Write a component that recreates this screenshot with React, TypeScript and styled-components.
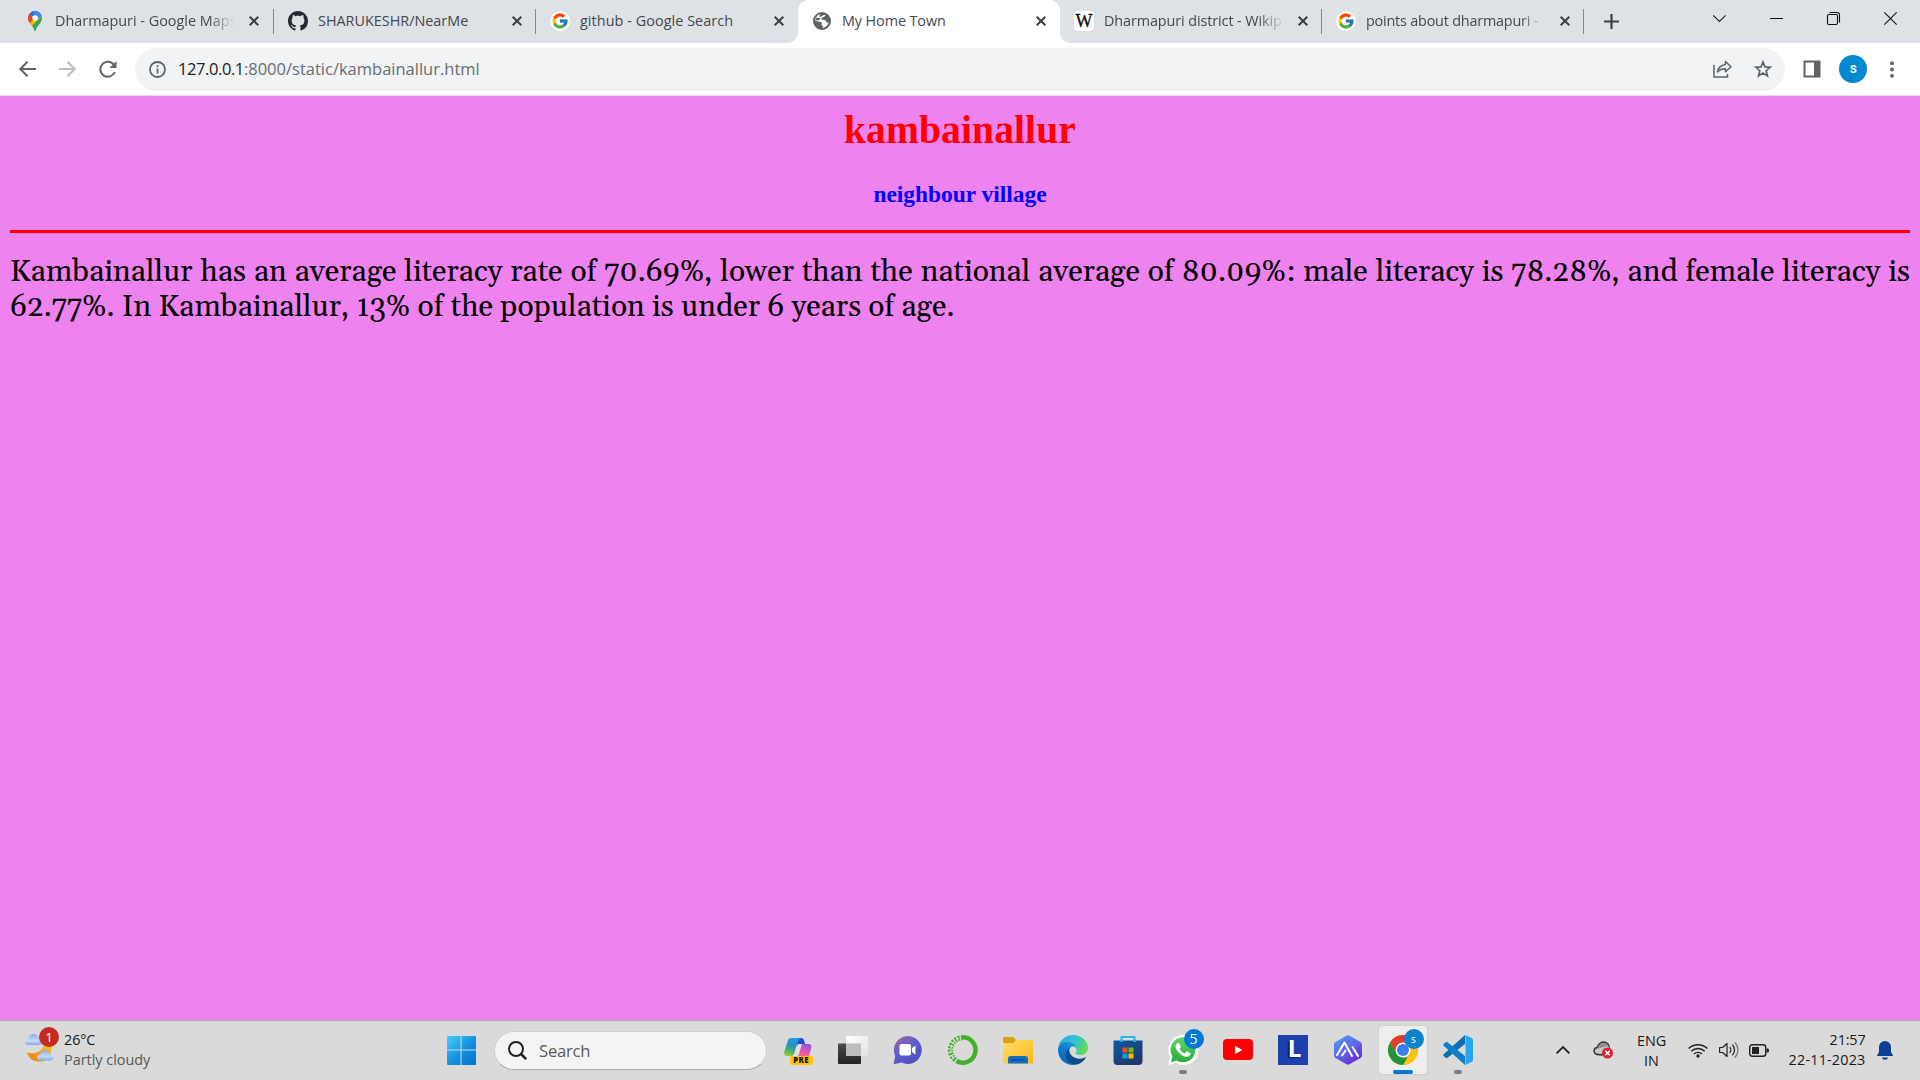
import React from 'react';
import styled, { createGlobalStyle, css } from 'styled-components';
import { FcGoogle } from 'react-icons/fc';

const UI = '"Open Sans", "Noto Sans", sans-serif';

const GlobalStyle = createGlobalStyle`
  * { box-sizing: border-box; }
  body { margin: 0; background: #dee1e6; font-family: ${UI}; }
  svg { display: block; flex: none; overflow: visible; }
`;

const Screen = styled.div`
  width: 1920px;
  height: 1080px;
  display: flex;
  flex-direction: column;
  overflow: hidden;
`;

/* ---------- tab strip ---------- */

const TabStrip = styled.header`
  height: 43px;
  flex: none;
  display: flex;
  padding-left: 12px;
  background: #dee1e6;
`;

const flare = css`
  content: '';
  position: absolute;
  bottom: 0;
  width: 10px;
  height: 10px;
`;

const Tab = styled.div<{ $active?: boolean; $divider?: boolean }>`
  position: relative;
  width: 262px;
  height: 43px;
  flex: none;
  display: flex;
  align-items: center;
  gap: 10px;
  padding: 0 10px 1px 14px;
  &:first-child { padding: 0 11px 1px 13px; }
  ${({ $divider }) => $divider && css`
    background: linear-gradient(#85888c, #85888c) right 9px / 1px 25px no-repeat;
  `}
  ${({ $active }) => $active && css`
    background: #fff;
    border-radius: 10px 10px 0 0;
    &::before {
      ${flare}
      left: -10px;
      background: radial-gradient(circle at 0 0, transparent 9.5px, #fff 10px);
    }
    &::after {
      ${flare}
      right: -10px;
      background: radial-gradient(circle at 100% 0, transparent 9.5px, #fff 10px);
    }
  `}
`;

const Favicon = styled.span<{ $plate?: string }>`
  width: 20px;
  height: 20px;
  flex: none;
  display: flex;
  align-items: center;
  justify-content: center;
  border-radius: ${({ $plate }) => $plate ?? '0'};
  background: ${({ $plate }) => ($plate ? '#fff' : 'transparent')};
  color: #24292f;
`;

const WikiLetter = styled.span`
  font: 400 18px/20px "Liberation Serif", serif;
  -webkit-text-stroke: 0.4px #111;
  color: #111;
`;

const TabTitle = styled.span<{ $spacing: number; $fade?: boolean }>`
  flex: 1;
  min-width: 0;
  overflow: hidden;
  white-space: nowrap;
  font-size: 14.4px;
  line-height: 22px;
  letter-spacing: ${({ $spacing }) => $spacing}px;
  color: #45484d;
  ${({ $fade }) => $fade && css`
    mask-image: linear-gradient(90deg, #000 154px, transparent 180px);
  `}
`;

const CloseSlot = styled.span`
  width: 20px;
  display: flex;
  justify-content: center;
  margin-right: -1px;
`;

const NewTab = styled.div`
  width: 54px;
  display: flex;
  align-items: center;
  justify-content: center;
`;

const WindowControls = styled.div`
  margin-left: auto;
  height: 37px;
  display: flex;
  padding-right: 1px;
`;

const WindowButton = styled.div`
  width: 57px;
  display: flex;
  align-items: center;
  justify-content: center;
`;

/* ---------- toolbar ---------- */

const Toolbar = styled.div`
  height: 53px;
  flex: none;
  display: flex;
  align-items: center;
  padding: 0 2px 0 7px;
  background: #fff;
  border-bottom: 1px solid #dcdfe3;
`;

const NavButton = styled.div<{ $faded?: boolean }>`
  width: 40.3px;
  flex: none;
  display: flex;
  justify-content: center;
  color: ${({ $faded }) => ($faded ? '#babcbe' : '#5f6368')};
`;

const AddressBar = styled.div`
  width: 1650px;
  height: 43px;
  flex: none;
  margin-left: 7px;
  display: flex;
  align-items: center;
  padding: 0 2px 0 14px;
  border-radius: 22px;
  background: #f1f3f4;
  color: #5f6368;
`;

const Url = styled.span`
  margin-left: 12px;
  flex: 1;
  font-size: 16.5px;
  line-height: 24px;
  letter-spacing: 0;
  color: #6a6e73;
  b { font-weight: 400; color: #202124; letter-spacing: -0.4px; }
`;

const BarAction = styled.div`
  width: 40px;
  display: flex;
  justify-content: center;
`;

const SideButton = styled.div<{ $width: number }>`
  width: ${({ $width }) => $width}px;
  display: flex;
  justify-content: center;
  color: #5f6368;
`;

const Avatar = styled.div`
  width: 28px;
  height: 28px;
  flex: none;
  border-radius: 50%;
  background: #0288d1;
  color: #fff;
  font: 500 14px/27px Roboto, sans-serif;
  text-align: center;
`;

/* ---------- page ---------- */

const Page = styled.main`
  flex: 1;
  padding: 11px 10px 0;
  background: violet;
  font-family: "Liberation Serif", serif;
`;

const Title = styled.h1`
  margin: 0;
  font-size: 39.5px;
  line-height: 47px;
  letter-spacing: 0.12px;
  text-align: center;
  color: red;
`;

const Subtitle = styled.h3`
  margin: 26px 0 0;
  font-size: 23.4px;
  line-height: 28px;
  text-align: center;
  color: blue;
`;

const Rule = styled.hr`
  height: 3px;
  margin: 22px 0 0;
  border: 0;
  background: red;
`;

const Article = styled.p`
  margin: 22px 0 0;
  font: 30px/35px Gelasio, Georgia, "Liberation Serif", serif;
  text-align: justify;
  color: #000;
`;

/* ---------- taskbar ---------- */

const Taskbar = styled.footer`
  height: 60px;
  flex: none;
  display: flex;
  background: #dadada;
  border-top: 1px solid #ababab;
`;

const Weather = styled.div`
  width: 433.5px;
  flex: none;
  display: flex;
  padding: 5px 0 0 24px;
`;

const WeatherIcon = styled.div`
  position: relative;
  width: 40px;
  height: 40px;
`;

const Badge = styled.span<{ $color: string; $size?: number }>`
  position: absolute;
  top: ${({ $size }) => ($size ? -6 : 1)}px;
  right: -6px;
  width: 20px;
  height: 20px;
  border-radius: 50%;
  background: ${({ $color }) => $color};
  color: #fff;
  font-size: ${({ $size }) => $size ?? 13.5}px;
  line-height: 20px;
  text-align: center;
`;

const WeatherBadge = styled(Badge)`
  right: auto;
  left: 15px;
`;

const SmallText = styled.div<{ $muted?: boolean; $spacing?: number }>`
  font-size: 14.4px;
  line-height: 20px;
  letter-spacing: ${({ $spacing }) => $spacing ?? 0}px;
  white-space: nowrap;
  color: ${({ $muted }) => ($muted ? '#575757' : '#1b1b1b')};
`;

const TwoLines = styled.div<{ $align?: string; $width?: number; $top?: number }>`
  width: ${({ $width }) => ($width ? `${$width}px` : 'auto')};
  padding-top: ${({ $top }) => $top ?? 9}px;
  text-align: ${({ $align }) => $align ?? 'left'};
`;

const WeatherText = styled.div`
  padding-top: 4px;
`;

const AppSlot = styled.div<{ $open?: 'idle' | 'active' }>`
  width: 55px;
  height: 58px;
  flex: none;
  display: flex;
  align-items: center;
  justify-content: center;
  position: relative;
  ${({ $open }) => $open && css`
    &::after {
      content: '';
      position: absolute;
      bottom: 5px;
      left: 50%;
      width: ${$open === 'active' ? 20 : 8}px;
      height: 4px;
      transform: translateX(-50%);
      border-radius: 2px;
      background: ${$open === 'active' ? '#0078d4' : '#7d7d7d'};
    }
  `}
`;

const IconBox = styled.div<{ $selected?: boolean }>`
  width: 30px;
  height: 30px;
  position: relative;
  ${({ $selected }) => $selected && css`
    border-radius: 1px;
    background: #eee;
    box-shadow: 0 0 0 9px #eee, 0 0 1px 10px #d0d0d0;
  `}
`;

const SearchBox = styled.div`
  width: 273.5px;
  height: 39px;
  flex: none;
  margin: 10px 3px 0 5px;
  display: flex;
  align-items: center;
  padding-left: 13px;
  gap: 12.5px;
  border: 1px solid #cfcfcf;
  border-bottom-color: #aaa;
  border-radius: 20px;
  background: #f4f4f4;
  font-size: 16.6px;
  letter-spacing: -0.2px;
  color: #5c5c5c;
`;

const PreLabel = styled.span`
  position: absolute;
  left: 7px;
  top: 21px;
  width: 23px;
  height: 9px;
  border-radius: 2px;
  background: #ffc20e;
  color: #1c1500;
  font-size: 7.8px;
  font-weight: 800;
  line-height: 9px;
  letter-spacing: 0.4px;
  text-align: center;
`;

const LetterTile = styled.div`
  width: 30px;
  height: 30px;
  background: #1e40af;
  color: #fff;
  font: 700 24px/26px "Open Sans", sans-serif;
  text-align: center;
  text-shadow: -2px 1px 0 #0f2850;
  padding-left: 4px;
`;

const Tray = styled.div`
  margin-left: auto;
  display: flex;
  padding-right: 16.5px;
`;

const TraySlot = styled.div<{ $width: number }>`
  width: ${({ $width }) => $width}px;
  height: 58px;
  flex: none;
  display: flex;
  align-items: center;
  justify-content: center;
`;

/* ---------- drawings ---------- */

const Close = () => (
  <svg width="10" height="10" viewBox="0 0 10 10" stroke="#3c4043" strokeWidth="2">
    <path d="M.7.7 9.3 9.3M9.3.7.7 9.3" />
  </svg>
);

const Octocat = () => (
  <svg width="20" height="20" viewBox="0 0 16 16" fill="#24292f">
    <path d="M8 0C3.58 0 0 3.58 0 8c0 3.54 2.29 6.53 5.47 7.59.4.07.55-.17.55-.38 0-.19-.01-.82-.01-1.49-2.01.37-2.53-.49-2.69-.94-.09-.23-.48-.94-.82-1.13-.28-.15-.68-.52-.01-.53.63-.01 1.08.58 1.23.82.72 1.21 1.87.87 2.33.66.07-.52.28-.87.51-1.07-1.78-.2-3.64-.89-3.64-3.95 0-.87.31-1.59.82-2.15-.08-.2-.36-1.02.08-2.12 0 0 .67-.21 2.2.82.64-.18 1.32-.27 2-.27.68 0 1.36.09 2 .27 1.53-1.04 2.2-.82 2.2-.82.44 1.1.16 1.92.08 2.12.51.56.82 1.27.82 2.15 0 3.07-1.87 3.75-3.65 3.95.29.25.54.73.54 1.48 0 1.07-.01 1.93-.01 2.2 0 .21.15.46.55.38A8.013 8.013 0 0 0 16 8c0-4.42-3.58-8-8-8z" />
  </svg>
);

const MapsPin = () => (
  <svg width="14" height="20" viewBox="0 0 14 20">
    <clipPath id="pin"><path d="M7 0a7 7 0 0 0-7 7c0 2 .7 3.5 1.8 5C3.600 14.400 5.400 16 6.200 19c.2.8.4 1 .8 1s.6-.2.8-1c.8-3 2.600-4.600 4.400-7C13.300 10.500 14 9 14 7a7 7 0 0 0-7-7Z" /></clipPath>
    <g clipPath="url(#pin)">
      <path fill="#34a853" d="M0 0h14v20H0z" />
      <path fill="#fbbc04" d="M0 12 9 2l4 4-10.500 10H0z" />
      <path fill="#ea4335" d="M-1 1 2 2l5 5-6 6-3-3z" />
      <path fill="#1a73e8" d="M1.600 2.500 4 0h4L7 7z" />
      <path fill="#4285f4" d="M5 9.500 13.500 0H4l3 4.600z" />
      <path fill="#4285f4" d="M9 0h5v5L9.500 8z" />
    </g>
    <circle cx="7" cy="7" r="2.700" fill="#fff" />
  </svg>
);

const Globe = () => (
  <svg width="18" height="18" viewBox="0 0 18 18">
    <circle cx="9" cy="9" r="9" fill="#5f6368" />
    <path fill="#fff" d="M12.300 2.800c-.2 1.700-1.200 2.400-2.600 2.500-.7.100-.9.500-.9 1.100 0 .7-.3 1-.9 1.300 1.600.2 3.300-.2 4.300.5.800.6.7 1.600 1.500 2 .6.300 1.500.2 2 .6-.8 2.700-3 4.600-6 5.100.2-1 .2-1.700-.4-2.200-.7-.5-.8-1.200-.5-2.100.3-.8-.2-1.300-1-1.500-1.800-.3-3.900-.4-5.700-1.300.1-3.300 2.300-6 5.300-6.700-.5.8-1.200 1.200-1 2.100.3.900 1.400.7 2.200.2.900-.6 1.900-1.500 3.700-1.600Z" />
    <path fill="#5f6368" d="M3.600 5.200c1.200.9 2.600.4 3.500.9.500.4.200 1.200-.6 1.600-1 .4-2.700.9-4.300.8Z" />
  </svg>
);

const WeatherArt = () => (
  <svg width="34" height="36" viewBox="0 0 34 36">
    <defs>
      <linearGradient id="cloud" x1="0" y1="0" x2="0" y2="1"><stop stopColor="#8caee8" /><stop offset=".6" stopColor="#c5daf8" /><stop offset="1" stopColor="#86a9e6" /></linearGradient>
      <linearGradient id="moon" x1="1" y1="0" x2="0" y2="1"><stop stopColor="#f8c320" /><stop offset="1" stopColor="#ee7b16" /></linearGradient>
    </defs>
    <path fill="url(#cloud)" d="M4 19C0 19 0 13.500 4 13c1-6 9-6.500 10.500-1.500 5 0 5 7.500 1 7.500Z" />
    <path fill="url(#moon)" d="M3 26.500c7 2.500 15.500-1 16.500-7 3-1 6-1.500 8-1 1 10-4 17.500-13 17-6 0-10-4-11.500-9Z" />
    <path fill="url(#cloud)" d="M16 34.500c-4 0-4-5.500 0-6 1.500-6 9-5.500 10 0 5 .5 4.500 6 .5 6Z" />
  </svg>
);

const WindowsLogo = () => (
  <svg width="30" height="30" viewBox="0 0 30 30">
    <defs><linearGradient id="win" gradientUnits="userSpaceOnUse" x1="0" y1="0" x2="30" y2="30"><stop stopColor="#4cd2ff" /><stop offset=".55" stopColor="#1291e0" /><stop offset="1" stopColor="#0072d0" /></linearGradient></defs>
    <path fill="url(#win)" d="M2 1h12.500v13.500H1V2a1 1 0 0 1 1-1ZM15.500 1H29a1 1 0 0 1 1 1v12.500H15.500ZM1 15.500h13.500V30H2a1 1 0 0 1-1-1ZM15.500 15.500H30V29a1 1 0 0 1-1 1H15.500Z" />
  </svg>
);

const Copilot = () => (
  <svg width="30" height="30" viewBox="0 0 30 30">
    <defs>
      <linearGradient id="cpa" x1=".5" y1="0" x2=".2" y2="1"><stop stopColor="#159fe8" /><stop offset=".4" stopColor="#2b8fc4" /><stop offset=".75" stopColor="#4fb85c" /><stop offset="1" stopColor="#a5c840" /></linearGradient>
      <linearGradient id="cpb" x1=".6" y1="0" x2=".3" y2="1"><stop stopColor="#9a50e0" /><stop offset=".5" stopColor="#d455c0" /><stop offset="1" stopColor="#ff6b72" /></linearGradient>
    </defs>
    <path fill="#1a50cf" d="M14 3h4c2.500 0 3 2 3.500 3.500L22 9h-5l-3 3Z" />
    <path fill="url(#cpa)" d="M8 3h10c-2.500 1-3 3-4 6l-2.500 8.500c-.8 2.500-1.500 3.500-3.500 3.500H4.500C1.500 21 .5 19 1.500 16l3.200-10C5.500 4 6.300 3 8 3Z" />
    <path fill="#dfe3e6" d="M15 9h3.500L15 21h-4.500c1.500-3 2.500-8 4.500-12Z" />
    <path fill="url(#cpb)" d="M19 9h6.500c2.500 0 3.500 1.700 2.800 4L26 21H14.500c1-.5 1.500-1.500 2-3.500Z" />
  </svg>
);

const TaskView = () => (
  <svg width="30" height="30" viewBox="0 0 30 30">
    <defs><linearGradient id="tvd" x1="0" y1="0" x2="0" y2="1"><stop stopColor="#4b4b4b" /><stop offset="1" stopColor="#222" /></linearGradient><linearGradient id="tvl" x1="0" y1="0" x2="1" y2="1"><stop stopColor="#fff" /><stop offset="1" stopColor="#e2e2e2" /></linearGradient></defs>
    <rect y="8.500" width="23" height="20.500" rx="1" fill="url(#tvd)" />
    <rect x="8" y="1" width="22" height="20" rx="1" fill="url(#tvl)" />
    <path d="M8 8.500h15V21H8Z" fill="#bdbdbd" />
  </svg>
);

const ChatApp = () => (
  <svg width="30" height="30" viewBox="0 0 30 30">
    <defs><linearGradient id="chat" x1="0" y1="0" x2=".7" y2="1"><stop offset=".1" stopColor="#9a68a8" /><stop offset=".55" stopColor="#5b5bc9" /><stop offset="1" stopColor="#4f52c4" /></linearGradient></defs>
    <path fill="url(#chat)" d="M15 1a14 14 0 1 1-6.500 26.500L2 29c-1 .1-1.400-.5-1.200-1.300L2.200 21A14 14 0 0 1 15 1Z" />
    <rect x="6.500" y="9" width="11.500" height="11.500" rx="2" fill="#fff" />
    <path fill="#fff" d="m19 13 3.500-2.500v9L19 17Z" />
  </svg>
);

const Anaconda = () => (
  <svg width="30" height="30" viewBox="0 0 30 30" fill="none" stroke="#43b02a">
    <path strokeWidth="4.500" d="M15 2.300A12.700 12.700 0 1 1 8.500 26" />
    <path strokeWidth="5" strokeDasharray="2 1.200" d="M15 2.700A12.300 12.300 0 0 0 8 25.300" />
    <path strokeWidth="1.300" stroke="#dadada" d="M11 3.300A12.500 12.500 0 0 0 6 23.500" strokeDasharray="3 2" />
  </svg>
);

const Explorer = () => (
  <svg width="30" height="30" viewBox="0 0 30 30">
    <defs><linearGradient id="fold" x1="0" y1="0" x2="1" y2="1"><stop stopColor="#ffdf70" /><stop offset="1" stopColor="#fcb813" /></linearGradient></defs>
    <path fill="#e0a008" d="M0 3.500A1.500 1.500 0 0 1 1.500 2H10l3 3h16a1 1 0 0 1 1 1v6H0Z" />
    <path fill="url(#fold)" d="M0 8h10l3-3h16a1 1 0 0 1 1 1v21.500a1 1 0 0 1-1 1H1a1 1 0 0 1-1-1Z" />
    <path fill="#0f6fc0" d="M5 28.500V24a3 3 0 0 1 3-3h14a3 3 0 0 1 3 3v4.500Z" />
    <path stroke="#0a3d7c" d="M8.500 25h13" />
  </svg>
);

const Edge = () => (
  <svg width="30" height="30" viewBox="0 0 256 256">
    <defs>
      <linearGradient id="e1" x1="0" y1=".5" x2="1" y2=".5"><stop stopColor="#0c4c8c" /><stop offset="1" stopColor="#114a8b" /></linearGradient>
      <linearGradient id="e2" x1=".8" y1="0" x2=".3" y2="1"><stop stopColor="#1b9de2" /><stop offset=".6" stopColor="#0f72c8" /><stop offset="1" stopColor="#0a68b8" /></linearGradient>
      <linearGradient id="e3" x1="0" y1=".3" x2="1" y2=".6"><stop stopColor="#2aa7e2" /><stop offset=".5" stopColor="#32c3d4" /><stop offset=".8" stopColor="#4fd280" /><stop offset="1" stopColor="#68dd50" /></linearGradient>
    </defs>
    <path fill="url(#e1)" d="M231 190.500c-3.400 1.800-6.900 3.400-10.500 4.700a101.700 101.700 0 0 1-35.900 6.400c-47.300 0-88.500-32.500-88.500-74.300a31.500 31.500 0 0 1 16.400-27.300c-42.800 1.800-53.800 46.400-53.800 72.500 0 74 68.100 81.400 82.800 81.400 7.900 0 19.800-2.300 27-4.600l1.300-.4a128.300 128.300 0 0 0 66.600-52.800 4 4 0 0 0-5.400-5.600Z" />
    <path fill="url(#e2)" d="M105.700 241.400a79.200 79.200 0 0 1-22.700-21.300 80.700 80.700 0 0 1 29.500-120c3.200-1.500 8.500-4.100 15.600-4a32.400 32.400 0 0 1 25.700 13 31.900 31.900 0 0 1 6.300 18.700c0-.2 24.500-79.600-80-79.600-43.900 0-80 41.700-80 78.200a130 130 0 0 0 12.100 56 128 128 0 0 0 156.400 67.100 75.600 75.600 0 0 1-62.800-8Z" />
    <path fill="url(#e3)" d="M152.300 148.900c-.9 1-3.300 2.500-3.300 5.700 0 2.600 1.700 5.200 4.800 7.300 14.300 10 41.400 8.600 41.500 8.600a59.600 59.600 0 0 0 30.300-8.300 61.400 61.400 0 0 0 30.400-52.900c.3-22.400-8-37.300-11.300-43.900C223.500 23.900 177.700 0 128 0A128 128 0 0 0 0 126.200c.5-36.500 36.800-66 80-66 3.500 0 23.500.3 42 10a72.600 72.600 0 0 1 30.900 29.300c6.100 10.600 7.200 24.100 7.200 29.500s-2.700 13.300-7.800 19.900Z" />
  </svg>
);

const Store = () => (
  <svg width="30" height="30" viewBox="0 0 30 30">
    <defs><linearGradient id="store" x1="0" y1="0" x2=".6" y2="1"><stop stopColor="#0a5aa8" /><stop offset="1" stopColor="#20386a" /></linearGradient></defs>
    <path fill="none" stroke="#2fb5ee" strokeWidth="2" d="M8.500 7V2h13v5" />
    <path fill="url(#store)" d="M.5 5.500h29V26a4 4 0 0 1-4 4h-21a4 4 0 0 1-4-4Z" />
    <path stroke="#35bdf2" strokeWidth="2" d="M8.500 4v3M21.500 4v3" />
    <path fill="#f25022" d="M9.500 12.500h5v5h-5z" /><path fill="#7fba00" d="M15.500 12.500h5v5h-5z" />
    <path fill="#00a4ef" d="M9.500 18.500h5v5h-5z" /><path fill="#ffb900" d="M15.500 18.500h5v5h-5z" />
  </svg>
);

const WhatsApp = () => (
  <svg width="30" height="30" viewBox="0 0 30 30">
    <defs><linearGradient id="wa" x1="0" y1="0" x2="0" y2="1"><stop stopColor="#5fd667" /><stop offset="1" stopColor="#25ae3d" /></linearGradient></defs>
    <path fill="#fff" d="M15 0a15 15 0 1 1-7 28L0 30l2-8A15 15 0 0 1 15 0Z" />
    <path fill="url(#wa)" d="M15 2.300a12.500 12.500 0 1 1-6.300 23.300L3 27.200l1.500-5.700A12.500 12.500 0 0 1 15 2.300Z" />
    <path fill="#fff" d="M10 8c.8-.2 1.300 0 1.600.7l1.200 2.800c.2.5 0 1-1.300 2.300 1.300 2.400 3 3.700 5.200 4.800l1.500-1.800c.3-.4.6-.4 1.100-.2l2.700 1.300c.6.300.6.600.5 1.200-.4 2-2.200 3-4 3C13.800 21.500 7.500 14.800 7.500 11.500 7.500 10 8.500 8.300 10 8Z" />
  </svg>
);

const YouTube = () => (
  <svg width="30" height="30" viewBox="0 0 30 30">
    <rect y="4" width="30" height="21" rx="4" fill="#f00" />
    <path fill="#fff" d="m12 10.700 7.500 4.200-7.500 4.200Z" />
  </svg>
);

const HexApp = () => (
  <svg width="30" height="30" viewBox="0 0 30 30">
    <defs><linearGradient id="hex" x1="0" y1="0" x2=".6" y2="1"><stop stopColor="#4c9cf0" /><stop offset=".5" stopColor="#5a70e8" /><stop offset="1" stopColor="#6a30d8" /></linearGradient></defs>
    <path fill="url(#hex)" d="M13.500.7a3 3 0 0 1 3 0l11 6.200a3 3 0 0 1 1.500 2.600v11a3 3 0 0 1-1.500 2.600l-11 6.200a3 3 0 0 1-3 0l-11-6.200A3 3 0 0 1 1 20.500v-11a3 3 0 0 1 1.500-2.600Z" />
    <path fill="none" stroke="#fff" strokeWidth="2" strokeLinecap="round" strokeLinejoin="round" d="M4 20 11.500 7.500 19 21M9 20.500l3.500-5M19.500 12 25 21" />
  </svg>
);

const Chrome = () => (
  <svg width="30" height="30" viewBox="0 0 30 30">
    <circle cx="15" cy="15" r="15" fill="#fbc116" />
    <path fill="#e33b2e" d="M2 7.500A15 15 0 0 1 28 7.500H15L8.500 18.700Z" />
    <path fill="#22933f" d="M2 7.500 8.500 18.700 15 22.500h6.500L15 30A15 15 0 0 1 2 7.500Z" />
    <path fill="#fbc116" d="M28 7.500A15 15 0 0 1 15 30l6.500-11.300a7.500 7.500 0 0 0-6.500-11.200Z" />
    <circle cx="15" cy="15" r="7.500" fill="#fff" /><circle cx="15" cy="15" r="6" fill="#3b7ded" />
  </svg>
);

const VSCode = () => (
  <svg width="30" height="30" viewBox="0 0 30 30">
    <path fill="#0d6fb4" d="M22 0v9L4.500 22.800a1.500 1.500 0 0 1-1.800 0L.6 21a1.200 1.200 0 0 1 0-1.800Z" />
    <path fill="#127fc8" d="M22 30v-9L4.500 7.200a1.500 1.500 0 0 0-1.800 0L.6 9a1.200 1.200 0 0 0 0 1.800Z" />
    <path fill="#26a6f0" d="M22 0 28.500 3A2.500 2.500 0 0 1 30 5.200v19.600a2.500 2.500 0 0 1-1.500 2.200L22 30c.4-.8.500-1 .5-2V2c0-1-.1-1.300-.5-2Z" />
  </svg>
);

const tabs = [
  { icon: <Favicon><MapsPin /></Favicon>, title: 'Dharmapuri - Google Maps', spacing: 0, fade: true, divider: true },
  { icon: <Favicon><Octocat /></Favicon>, title: 'SHARUKESHR/NearMe', spacing: 0, divider: true },
  { icon: <Favicon $plate="50%"><FcGoogle size={18} /></Favicon>, title: 'github - Google Search', spacing: 0.06 },
  { icon: <Favicon><Globe /></Favicon>, title: 'My Home Town', spacing: -0.1, active: true },
  { icon: <Favicon $plate="4px"><WikiLetter>W</WikiLetter></Favicon>, title: 'Dharmapuri district - Wikip', spacing: -0.1, fade: true, divider: true },
  { icon: <Favicon $plate="50%"><FcGoogle size={18} /></Favicon>, title: 'points about dharmapuri -', spacing: -0.2, fade: true, divider: true },
];

export default function App() {
  return (
    <Screen>
      <GlobalStyle />
      <TabStrip>
        {tabs.map((t) => (
          <Tab key={t.title} $active={t.active} $divider={t.divider}>
            {t.icon}
            <TabTitle $spacing={t.spacing} $fade={t.fade}>{t.title}</TabTitle>
            <CloseSlot><Close /></CloseSlot>
          </Tab>
        ))}
        <NewTab>
          <svg width="15" height="15" viewBox="0 0 15 15" stroke="#3c4043" strokeWidth="2.200"><path d="M7.500 0v15M0 7.500h15" /></svg>
        </NewTab>
        <WindowControls>
          <WindowButton><svg width="13" height="7" viewBox="0 0 13 7" fill="none" stroke="#222" strokeWidth="1.100"><path d="m.3.3 6.200 6.200L12.700.3" /></svg></WindowButton>
          <WindowButton><svg width="13" height="1" viewBox="0 0 13 1"><path d="M0 0h13v1H0z" fill="#111" /></svg></WindowButton>
          <WindowButton>
            <svg width="13" height="13" viewBox="0 0 13 13" fill="none" stroke="#111" strokeWidth="1.100">
              <rect x=".5" y="2.500" width="10" height="10" rx="1.500" /><path d="M2.500.5h7.500a2.500 2.500 0 0 1 2.500 2.500v7.500" />
            </svg>
          </WindowButton>
          <WindowButton><svg width="13" height="13" viewBox="0 0 13 13" stroke="#111" strokeWidth="1.100"><path d="m.3.3 12.400 12.400M12.700.3.3 12.700" /></svg></WindowButton>
        </WindowControls>
      </TabStrip>

      <Toolbar>
        <NavButton><svg width="17" height="16" viewBox="0 0 17 16" fill="none" stroke="currentColor" strokeWidth="2"><path d="M17 8H1.500M8.500.8 1.300 8l7.200 7.200" /></svg></NavButton>
        <NavButton $faded><svg width="17" height="16" viewBox="0 0 17 16" fill="none" stroke="currentColor" strokeWidth="2"><path d="M0 8h15.500M8.500.8 15.700 8l-7.200 7.200" /></svg></NavButton>
        <NavButton>
          <svg width="18" height="17" viewBox="0 0 18 17" fill="none" stroke="currentColor" strokeWidth="2"><path d="M15.800 11a7.500 7.500 0 1 1-.9-7.200" /><path d="M17.500 0v7h-7Z" fill="currentColor" stroke="none" /></svg>
        </NavButton>
        <AddressBar>
          <svg width="17" height="17" viewBox="0 0 17 17" fill="none" stroke="currentColor" strokeWidth="1.800"><circle cx="8.500" cy="8.500" r="7.500" /><path d="M8.500 7.500v5M8.500 4.300v1.900" /></svg>
          <Url><b>127.0.0.1</b>:8000/static/kambainallur.html</Url>
          <BarAction>
            <svg width="19" height="18" viewBox="0 0 19 18" fill="none" stroke="currentColor" strokeWidth="1.500">
              <path d="M1 5v12h13.500v-3" /><path strokeLinejoin="round" d="M12.500 1.500 18 6.700l-5.500 5V8.800C9 8.800 6.500 9.800 4.500 12c.5-3.500 3-6.700 8-7.400Z" />
            </svg>
          </BarAction>
          <BarAction>
            <svg width="18" height="18" viewBox="0 0 18 18" fill="none" stroke="currentColor" strokeWidth="1.700"><path d="m9 2 2 4.900 5.200.4-4 3.400 1.300 5.200L9 13.100l-4.500 2.800 1.300-5.200-4-3.400L7 6.900Z" /></svg>
          </BarAction>
        </AddressBar>
        <SideButton $width={55}><svg width="18" height="18" viewBox="0 0 18 18"><path fill="currentColor" fillRule="evenodd" d="M.5.500h17v17H.5ZM2.500 2.500v13H11v-13Z" /></svg></SideButton>
        <SideButton $width={27}><Avatar>s</Avatar></SideButton>
        <SideButton $width={51}><svg width="4" height="17" viewBox="0 0 4 17" fill="currentColor"><circle cx="2" cy="2.200" r="1.900" /><circle cx="2" cy="8.500" r="1.900" /><circle cx="2" cy="14.800" r="1.900" /></svg></SideButton>
      </Toolbar>

      <Page>
        <Title>kambainallur</Title>
        <Subtitle>neighbour village</Subtitle>
        <Rule />
        <Article>
          Kambainallur has an average literacy rate of 70.69%, lower than the national average of 80.09%: male literacy is 78.28%, and female literacy is 62.77%. In Kambainallur, 13% of the population is under 6 years of age.
        </Article>
      </Page>

      <Taskbar>
        <Weather>
          <WeatherIcon><WeatherArt /><WeatherBadge $color="#c42b1c">1</WeatherBadge></WeatherIcon>
          <WeatherText>
            <SmallText $spacing={-0.1}>26°C</SmallText>
            <SmallText $muted>Partly cloudy</SmallText>
          </WeatherText>
        </Weather>
        <AppSlot><WindowsLogo /></AppSlot>
        <SearchBox>
          <svg width="19" height="19" viewBox="0 0 19 19" fill="none" stroke="#222" strokeWidth="2"><circle cx="8" cy="8" r="7" /><path strokeWidth="2.500" d="m13 13 5.200 5.200" /></svg>
          Search
        </SearchBox>
        <AppSlot><IconBox><Copilot /><PreLabel>PRE</PreLabel></IconBox></AppSlot>
        <AppSlot><TaskView /></AppSlot>
        <AppSlot><ChatApp /></AppSlot>
        <AppSlot><Anaconda /></AppSlot>
        <AppSlot><Explorer /></AppSlot>
        <AppSlot><Edge /></AppSlot>
        <AppSlot><Store /></AppSlot>
        <AppSlot $open="idle"><IconBox><WhatsApp /><Badge $color="#0078d4" $size={14}>5</Badge></IconBox></AppSlot>
        <AppSlot><YouTube /></AppSlot>
        <AppSlot><LetterTile>L</LetterTile></AppSlot>
        <AppSlot><HexApp /></AppSlot>
        <AppSlot $open="active"><IconBox $selected><Chrome /><Badge $color="#0b84cb" $size={10}>s</Badge></IconBox></AppSlot>
        <AppSlot $open="idle"><VSCode /></AppSlot>
        <Tray>
          <TraySlot $width={40}><svg width="14" height="8" viewBox="0 0 14 8" fill="none" stroke="#222" strokeWidth="1.800"><path d="m.6 7.400 6.400-6.400 6.400 6.400" /></svg></TraySlot>
          <TraySlot $width={40}>
            <svg width="20" height="18" viewBox="0 0 20 18">
              <path fill="#8f8f8f" stroke="#333" strokeWidth="1.300" d="M4 13.500c-4-1-4-6.500 0-7C5.500 2 9 .5 12 1.200c3 .8 4 2.800 4.300 4.800L9 14Z" />
              <path fill="#c9c9c9" d="M3 12c-2-2-1-4 2-4.500L15 5l1 2-7 6Z" />
              <circle cx="14.500" cy="12" r="5.500" fill="#dc2331" /><path stroke="#fff" strokeWidth="1.600" d="m12.300 9.800 4.400 4.400M16.700 9.800l-4.400 4.400" />
            </svg>
          </TraySlot>
          <TwoLines $align="center" $width={57} $top={10}><SmallText $spacing={-0.1}>ENG</SmallText><SmallText>IN</SmallText></TwoLines>
          <TraySlot $width={36}>
            <svg width="20" height="15" viewBox="0 0 20 15" fill="none" stroke="#222" strokeWidth="1.400"><path d="M.6 5.600a13.300 13.300 0 0 1 18.800 0M3.300 8.300a9.500 9.500 0 0 1 13.400 0M6 11a5.700 5.700 0 0 1 8 0" /><circle cx="10" cy="13" r="1.700" fill="#222" stroke="none" /></svg>
          </TraySlot>
          <TraySlot $width={25}>
            <svg width="20" height="16" viewBox="0 0 20 16" fill="none" stroke="#222" strokeWidth="1.200"><path strokeLinejoin="round" d="M.6 5.500h3L8 1.500v13l-4.400-4h-3Z" /><path d="M10.700 5.200a4 4 0 0 1 0 5.600M13.300 2.800a7.300 7.300 0 0 1 0 10.400" /><path stroke="#777" d="M15.800.5a10.500 10.500 0 0 1 0 15" /></svg>
          </TraySlot>
          <TraySlot $width={35}>
            <svg width="20" height="13" viewBox="0 0 20 13"><rect x=".7" y=".7" width="16" height="11.600" rx="2.500" fill="none" stroke="#222" strokeWidth="1.400" /><path fill="#222" d="M3 3h7v7H3ZM17.500 4.500h1c1 0 1.500.5 1.500 2s-.5 2-1.500 2h-1Z" /></svg>
          </TraySlot>
          <TwoLines $align="right" $width={89.5}><SmallText $spacing={-0.15}>21:57</SmallText><SmallText $spacing={0.18}>22-11-2023</SmallText></TwoLines>
          <TraySlot $width={38}>
            <svg width="16" height="19" viewBox="0 0 16 19" fill="#0a3f91"><path d="M8 0a6 6 0 0 1 6 6v5l2 3.500v.5H0v-.5L2 11V6a6 6 0 0 1 6-6ZM5 16.500h6c-.5 3-5.500 3-6 0Z" /></svg>
          </TraySlot>
        </Tray>
      </Taskbar>
    </Screen>
  );
}
